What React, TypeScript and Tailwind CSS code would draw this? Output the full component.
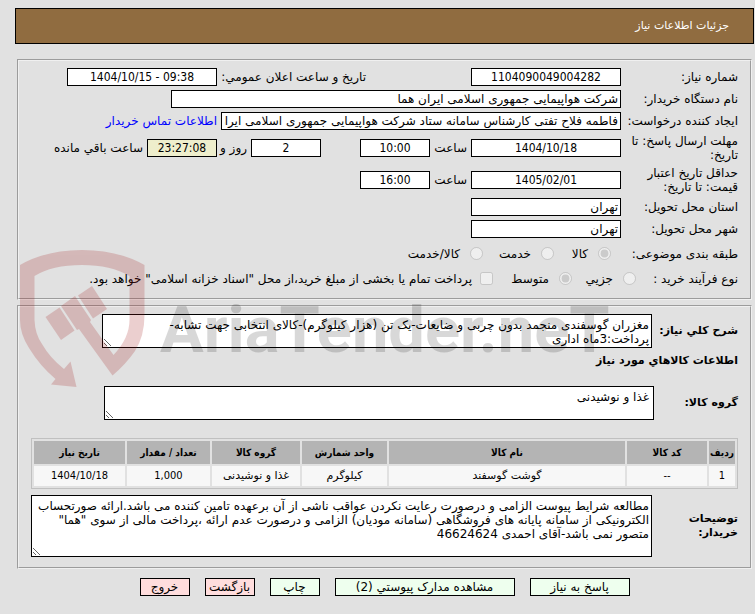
import type { ReactNode } from 'react'

const field = 'h-[18px] shrink-0 border border-black bg-white px-0.5 text-[12px] leading-4 text-black outline-none'
const number = "font-['DejaVu_Sans_Condensed','DejaVu_Sans',sans-serif]"
const digits = `${field} ${number} text-center`
const area =
    'block overflow-hidden border border-black bg-white px-0.5 py-[3px] text-[12px] leading-[14px] text-black outline-none'
const section = 'mr-[2px] ml-[2px] border-2 border-[#f0f0f0] px-3 [border-style:groove]'
const actionBase = 'h-[18px] border border-black text-center text-[12px] leading-4 whitespace-nowrap'

function Row({ label, htmlFor, tall, children }: { label: string; htmlFor: string; tall?: boolean; children: ReactNode }) {
    return (
        <div className={tall ? 'flex h-8 items-center' : 'flex h-[22px] items-center'}>
            <label htmlFor={htmlFor} className="w-[117px] shrink-0 pl-1">
                {label}
            </label>
            {children}
        </div>
    )
}

const columns = [
    { title: 'ردیف', width: 'w-[26px]', value: '1', style: number },
    { title: 'کد کالا', width: 'w-[80px]', value: '--', style: number },
    { title: 'نام کالا', width: '', value: 'گوشت گوسفند', style: '' },
    { title: 'واحد شمارش', width: 'w-[85px]', value: 'کیلوگرم', style: '' },
    { title: 'گروه کالا', width: 'w-[88px]', value: 'غذا و نوشیدنی', style: '' },
    { title: 'تعداد / مقدار', width: 'w-[83px]', value: '1,000', style: number },
    { title: 'تاریخ نیاز', width: 'w-[91px]', value: '1404/10/18', style: number },
]

const actions = [
    { title: 'پاسخ به نیاز', style: 'w-[100px] bg-[#eeffee]' },
    { title: 'مشاهده مدارک پیوستي (2)', style: 'w-[180px] bg-[#eeffee]' },
    { title: 'چاپ', style: 'w-[50px] bg-[#eeffee]' },
    { title: 'بازگشت', style: 'w-[50px] bg-[#ffdddd]' },
    { title: 'خروج', style: 'w-[50px] bg-[#ffdddd]' },
]

function Watermark() {
    return (
        <svg
            aria-hidden="true"
            className="pointer-events-none absolute top-[245px] left-5"
            width="600"
            height="145"
            viewBox="20 245 600 145"
        >
            <g fill="#a01414" opacity="0.2">
                <path d="M20 265 Q46 250 82 250 Q118 250 144.500 265 V315 Q144.500 336 135 351 Q126 364 112.500 375.500 L79 329 L77 330 L61 306 L75 296 L91 320 L90 322 L113.500 355 Q129.500 338 129.500 320 V276 Q111 265 82 265 Q52 265 34.500 276 V320 Q35 334 42 344 Q50 358 64 369 L70.500 361.500 L76.500 387 L51 384.500 L55.500 379 Q40 366 29 348 Q20 334 20 320 Z" />
                <path d="M45.500 317 L59.500 307.500 L74.500 330.500 L61 340 Z" />
                <path d="M78 295.500 L92 286 L107 309 L93 318.500 Z" />
            </g>
            <text
                x="160"
                y="352"
                direction="ltr"
                fill="#000"
                opacity="0.15"
                className="font-[Roboto,'Liberation_Sans',sans-serif] text-[65px] font-bold"
            >
                AriaTender.neT
            </text>
        </svg>
    )
}

export default function App() {
    return (
        <main
            dir="rtl"
            className="relative min-h-screen bg-[#e1e1e1] pt-2 pr-px pb-4 pl-[15px] font-['DejaVu_Sans',sans-serif] text-[12px] leading-[14px] text-black"
        >
            <h1 className="flex h-9 items-center border border-black bg-[#906c40] px-6 text-[11px] text-white">
                جزئیات اطلاعات نیاز
            </h1>

            <section className={`${section} mt-[15px] pt-[5px] pb-2`}>
                <Row label="شماره نیاز:" htmlFor="need-no">
                    <input id="need-no" readOnly defaultValue="1104090049004282" className={`${digits} w-[150px]`} />
                    <label htmlFor="announced" className="mr-[105px] w-[149px] shrink-0 whitespace-nowrap">
                        تاریخ و ساعت اعلان عمومي:
                    </label>
                    <input id="announced" dir="ltr" readOnly defaultValue="1404/10/15 - 09:38" className={`${digits} w-[150px]`} />
                </Row>
                <Row label="نام دستگاه خریدار:" htmlFor="buyer">
                    <input id="buyer" readOnly defaultValue="شرکت هواپیمایی جمهوری اسلامی ایران هما" className={`${field} w-[450px]`} />
                </Row>
                <Row label="ایجاد کننده درخواست:" htmlFor="creator">
                    <input
                        id="creator"
                        readOnly
                        defaultValue="فاطمه فلاح تفتی کارشناس سامانه ستاد شرکت هواپیمایی جمهوری اسلامی ایران هما"
                        className={`${field} w-[400px]`}
                    />
                    <a href="#contact" className="mr-1 whitespace-nowrap text-[#0000ff]">
                        اطلاعات تماس خریدار
                    </a>
                </Row>
                <Row label="مهلت ارسال پاسخ: تا تاریخ:" htmlFor="reply-date" tall>
                    <input id="reply-date" dir="ltr" readOnly defaultValue="1404/10/18" className={`${digits} w-[150px]`} />
                    <label htmlFor="reply-time" className="w-[41px] shrink-0 pr-1">
                        ساعت
                    </label>
                    <input id="reply-time" dir="ltr" readOnly defaultValue="10:00" className={`${digits} w-[70px]`} />
                    <input id="days" readOnly defaultValue="2" className={`${digits} mr-[39px] w-[70px]`} />
                    <label htmlFor="days" className="w-[34px] shrink-0 pr-1 whitespace-nowrap">
                        روز و
                    </label>
                    <input id="left" dir="ltr" readOnly defaultValue="23:27:08" className={`${digits} w-[70px] bg-[#eeeecc]!`} />
                    <label htmlFor="left" className="pr-1 whitespace-nowrap">
                        ساعت باقي مانده
                    </label>
                </Row>
                <Row label="حداقل تاریخ اعتبار قیمت: تا تاریخ:" htmlFor="price-date" tall>
                    <input id="price-date" dir="ltr" readOnly defaultValue="1405/02/01" className={`${digits} w-[150px]`} />
                    <label htmlFor="price-time" className="w-[41px] shrink-0 pr-1">
                        ساعت
                    </label>
                    <input id="price-time" dir="ltr" readOnly defaultValue="16:00" className={`${digits} w-[70px]`} />
                </Row>
                <Row label="استان محل تحویل:" htmlFor="province">
                    <input id="province" readOnly defaultValue="تهران" className={`${field} w-[150px]`} />
                </Row>
                <Row label="شهر محل تحویل:" htmlFor="city">
                    <input id="city" readOnly defaultValue="تهران" className={`${field} w-[150px]`} />
                </Row>

                <div role="radiogroup" aria-labelledby="subject" className="flex h-7 items-center">
                    <span id="subject" className="w-[127px] shrink-0">
                        طبقه بندی موضوعی:
                    </span>
                    <label className="flex w-[57px] shrink-0 gap-2.5">
                        <input type="radio" name="subject" disabled defaultChecked className="size-[13px] shrink-0" />
                        کالا
                    </label>
                    <label className="flex w-[71px] shrink-0 gap-2.5">
                        <input type="radio" name="subject" disabled className="size-[13px] shrink-0" />
                        خدمت
                    </label>
                    <label className="flex gap-2.5">
                        <input type="radio" name="subject" disabled className="size-[13px] shrink-0" />
                        کالا/خدمت
                    </label>
                </div>
                <div role="radiogroup" aria-labelledby="process" className="flex h-[22px] items-center">
                    <span id="process" className="w-[102px] shrink-0">
                        نوع فرآیند خرید :
                    </span>
                    <label className="flex w-16 shrink-0 gap-2.5">
                        <input type="radio" name="process" disabled className="size-[13px] shrink-0" />
                        جزیي
                    </label>
                    <label className="flex w-[79px] shrink-0 gap-2.5">
                        <input type="radio" name="process" disabled defaultChecked className="size-[13px] shrink-0" />
                        متوسط
                    </label>
                    <label className="flex gap-2 whitespace-nowrap">
                        <input type="checkbox" disabled className="size-[13px] shrink-0" />
                        پرداخت تمام یا بخشی از مبلغ خرید،از محل "اسناد خزانه اسلامی" خواهد بود.
                    </label>
                </div>
            </section>

            <section className={`${section} mt-[5px] pt-[7px] pb-2.5`}>
                <div className="flex items-center">
                    <label htmlFor="summary" className="w-[86px] shrink-0 text-[11px] font-bold whitespace-nowrap">
                        شرح کلي نیاز:
                    </label>
                    <textarea
                        id="summary"
                        readOnly
                        className={`${area} h-[34px] w-[550px]`}
                        defaultValue={'مغزران گوسفندی منجمد بدون چربی و ضایعات-یک تن (هزار کیلوگرم)-کالای انتخابی جهت تشابه-\nپرداخت:3ماه اداری'}
                    />
                </div>
                <h2 className="mt-1.5 text-[11px] leading-[14px] font-bold">اطلاعات کالاهاي مورد نیاز</h2>
                <div className="mt-[18px] flex items-center">
                    <label htmlFor="group" className="w-[84px] shrink-0 text-[11px] font-bold">
                        گروه کالا:
                    </label>
                    <textarea id="group" readOnly className={`${area} h-[34px] w-[550px] pr-1`} defaultValue="غذا و نوشیدنی" />
                </div>

                <table className="mt-[18px] w-full table-fixed border-separate border-spacing-0.5 border border-[#c0c0c0] text-center">
                    <thead>
                        <tr className="h-[23px] bg-[#b4b4b4]">
                            {columns.map((c) => (
                                <th key={c.title} className={`${c.width} ${number} p-0 text-[10px] whitespace-nowrap`}>
                                    {c.title}
                                </th>
                            ))}
                        </tr>
                    </thead>
                    <tbody>
                        <tr className="h-5 bg-[#f7f7f7]">
                            {columns.map((c) => (
                                <td key={c.title} className={`${c.style} p-0 text-[11px]`}>
                                    {c.value}
                                </td>
                            ))}
                        </tr>
                    </tbody>
                </table>

                <div className="mt-1.5 flex items-center">
                    <label htmlFor="notes" className="w-[86px] shrink-0 pl-6 text-[11px] font-bold">
                        توضیحات خریدار:
                    </label>
                    <textarea
                        id="notes"
                        readOnly
                        className={`${area} h-[62px] min-w-0 flex-1`}
                        defaultValue={
                            'مطالعه شرایط پیوست الزامی و درصورت رعایت نکردن عواقب ناشی از آن برعهده تامین کننده می باشد.ارائه صورتحساب\nالکترونیکی از سامانه پایانه های فروشگاهی (سامانه مودیان) الزامی و درصورت عدم ارائه ،پرداخت مالی از سوی "هما"\nمتصور نمی باشد-آقای احمدی 46624624'
                        }
                    />
                </div>
            </section>

            <div className="mt-[9px] flex justify-center gap-[15px]">
                {actions.map((a) => (
                    <button key={a.title} type="button" className={`${actionBase} ${a.style}`}>
                        {a.title}
                    </button>
                ))}
            </div>

            <Watermark />
        </main>
    )
}
